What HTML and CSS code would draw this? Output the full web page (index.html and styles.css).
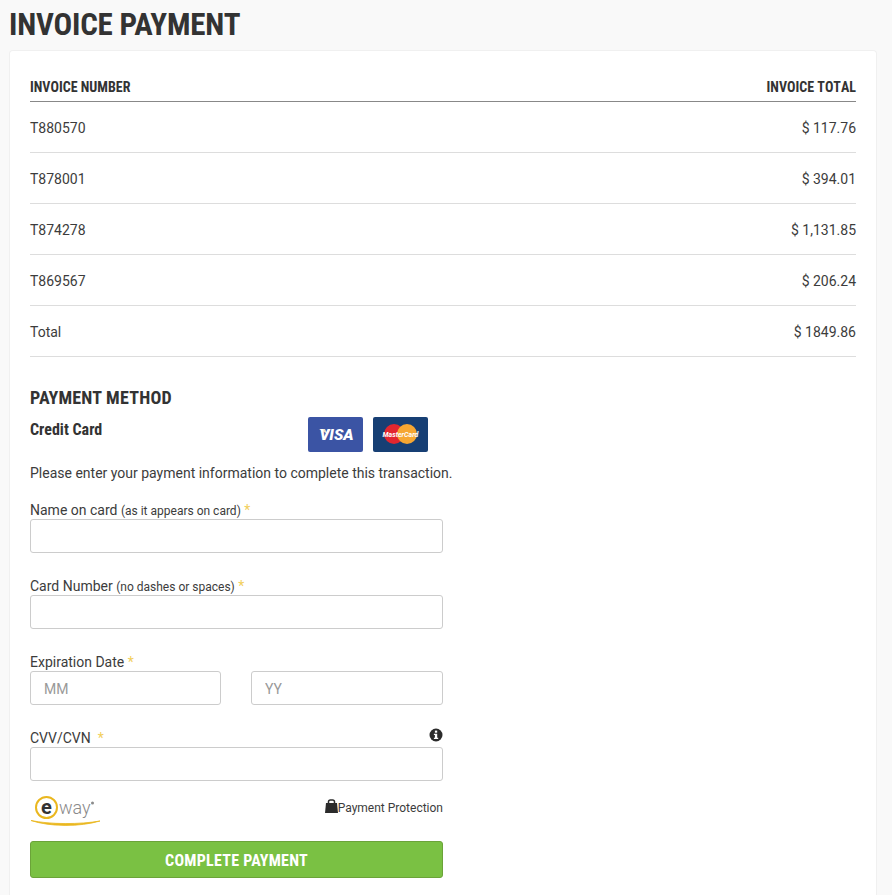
FILE: index.html
```html
<!DOCTYPE html>
<html lang="en">
<head>
<meta charset="utf-8">
<title>Invoice Payment</title>
<link rel="stylesheet" href="styles.css">
</head>
<body>
<main class="page">
  <h1 class="title">INVOICE PAYMENT</h1>
  <section class="card">
    <table class="invoices">
      <thead>
        <tr><th>INVOICE NUMBER</th><th class="num">INVOICE TOTAL</th></tr>
      </thead>
      <tbody>
        <tr><td>T880570</td><td class="num">$ 117.76</td></tr>
        <tr><td>T878001</td><td class="num">$ 394.01</td></tr>
        <tr><td>T874278</td><td class="num">$ 1,131.85</td></tr>
        <tr><td>T869567</td><td class="num">$ 206.24</td></tr>
        <tr><td>Total</td><td class="num">$ 1849.86</td></tr>
      </tbody>
    </table>

    <h2 class="method">PAYMENT METHOD</h2>
    <form class="pay">
      <div class="cc-row">
        <h3 class="cc-title">Credit Card</h3>
        <div class="logos">
          <svg class="logo" viewBox="0 0 55 35" width="55" height="35" aria-label="Visa">
            <rect width="55" height="35" rx="2" fill="#3b54a4"/>
            <path d="M11 12h6l2.500 5z" fill="#e6dcc4"/>
            <text x="28.500" y="22.800" text-anchor="middle" class="visa-text">VISA</text>
          </svg>
          <svg class="logo" viewBox="0 0 55 35" width="55" height="35" aria-label="MasterCard">
            <rect width="55" height="35" rx="2" fill="#173f74"/>
            <circle cx="21" cy="17" r="10" fill="#e2262f"/>
            <circle cx="34" cy="17" r="10" fill="#f6a732"/>
            <text x="27.500" y="19.500" text-anchor="middle" class="mc-text">MasterCard</text>
          </svg>
        </div>
      </div>
      <p class="intro">Please enter your payment information to complete this transaction.</p>

      <div class="field">
        <label class="lbl" for="name">Name on card <small>(as it appears on card)</small> <span class="req">*</span></label>
        <input class="input" id="name" type="text">
      </div>
      <div class="field">
        <label class="lbl" for="num">Card Number <small>(no dashes or spaces)</small> <span class="req">*</span></label>
        <input class="input" id="num" type="text">
      </div>
      <div class="field">
        <label class="lbl" for="mm">Expiration Date <span class="req">*</span></label>
        <div class="exp">
          <input class="input" id="mm" type="text" placeholder="MM">
          <input class="input" type="text" placeholder="YY">
        </div>
      </div>
      <div class="field">
        <div class="cvv-head">
          <label class="lbl" for="cvv">CVV/CVN &nbsp;<span class="req">*</span></label>
          <svg class="info" viewBox="0 0 14 14" width="14" height="14" aria-hidden="true">
            <circle cx="7" cy="7" r="6.500" fill="#2b2b2b"/>
            <rect x="5.900" y="2.600" width="2.300" height="2.100" fill="#fff"/>
            <path d="M4.900 5.800h3.300v3.900h1v1.300H4.900V9.700h1V7.100h-1z" fill="#fff"/>
          </svg>
        </div>
        <input class="input" id="cvv" type="text">
      </div>

      <div class="secure">
        <svg class="eway" viewBox="0 0 72 34" width="72" height="34" aria-label="eWAY">
          <circle cx="16.500" cy="12.500" r="10.500" fill="#fff" stroke="#eab71f" stroke-width="2"/>
          <text x="16.500" y="19" text-anchor="middle" class="eway-e">e</text>
          <text x="29" y="18.500" class="eway-way">way</text>
          <circle cx="62.500" cy="8" r="1.500" fill="#8a8a8a"/>
          <path d="M1 25.500C20 32 50 32 70 26C50 29.500 20 29.500 1 25.500z" fill="#eab71f" stroke="#eab71f" stroke-width=".8"/>
        </svg>
        <div class="protect">
          <svg class="lock" viewBox="0 0 13 14" width="13" height="14" aria-hidden="true">
            <path d="M3.500 4.500V2.800A1.900 1.900 0 0 1 5.400 .9h2.200a1.900 1.900 0 0 1 1.900 1.900v1.700" fill="none" stroke="#2b2b2b" stroke-width="1.500"/>
            <path d="M1 4h11L13 14H0z" fill="#2b2b2b"/>
          </svg>
          <span class="protect-text">Payment Protection</span>
        </div>
      </div>

      <button class="submit" type="button">COMPLETE PAYMENT</button>
    </form>
  </section>
</main>
</body>
</html>
```
FILE: styles.css
```css
* { box-sizing: border-box; }
html, body { margin: 0; padding: 0; }
body {
  background: #f9f9f9;
  font-family: Roboto, "Liberation Sans", sans-serif;
  font-size: 14px;
  color: #3c3c3c;
}
.page { padding: 0 15px 0 9px; }
.title {
  margin: 0;
  padding-top: 6px;
  height: 50px;
  font-size: 31px;
  line-height: 37px;
  font-weight: 700;
  font-stretch: 75%;
  letter-spacing: -.2px;
  color: #333;
}
.card {
  background: #fff;
  border: 1px solid #f0f0f0;
  border-bottom: 0;
  border-radius: 4px 4px 0 0;
  padding: 20px 20px 0;
  height: 845px;
}
.invoices { width: 100%; border-collapse: collapse; }
.invoices th {
  text-align: left;
  font-size: 14px;
  font-weight: 700;
  font-stretch: 75%;
  font-kerning: none;
  height: 30px;
  padding: 2px 0 0;
  color: #333;
  border-bottom: 1px solid #888;
}
.invoices td {
  height: 51px;
  padding: 2px 0 0;
  border-bottom: 1px solid #ddd;
}
.invoices .num { text-align: right; }
.method {
  margin: 30px 0 0;
  font-size: 18px;
  line-height: 22px;
  font-weight: 700;
  font-stretch: 75%;
  letter-spacing: .2px;
  color: #333;
}
.pay { width: 413px; }
.cc-row {
  display: flex;
  justify-content: space-between;
  padding-right: 15px;
  margin-top: 8px;
  height: 35px;
}
.cc-title {
  margin: 0;
  padding-top: 3px;
  font-size: 16px;
  line-height: 20px;
  font-weight: 700;
  font-stretch: 75%;
  color: #333;
}
.logos { display: flex; gap: 10px; }
.logo { display: block; }
.visa-text { font: italic 900 15.500px Roboto, sans-serif; fill: #fff; }
.mc-text { font: italic 700 7px Roboto, sans-serif; fill: #fff; }
.intro { margin: 11px 0 0; line-height: 20px; white-space: nowrap; }
.field { margin-top: 18px; }
.field + .field { margin-top: 24px; }
.lbl { display: block; line-height: 18px; height: 18px; }
.lbl small { font-size: 12px; }
.req { color: #f2cf5b; }
.input {
  display: block;
  width: 100%;
  height: 34px;
  border: 1px solid #ccc;
  border-radius: 3px;
  background: #fff;
  padding: 2px 13px 0;
  font: 14px Roboto, sans-serif;
  color: #333;
}
.input::placeholder { color: #999; opacity: 1; }
.exp { display: grid; grid-template-columns: 191px 192px; column-gap: 30px; }
.cvv-head { display: flex; justify-content: space-between; align-items: flex-start; }
.info { margin: -1px 0 0; }
.secure {
  display: flex;
  justify-content: space-between;
  align-items: flex-start;
  margin-top: 14px;
  height: 46px;
}
.protect { display: flex; align-items: flex-start; font-size: 12px; margin-top: 4px; }
.protect-text { margin-top: 2px; line-height: 14px; }
.submit {
  display: block;
  width: 100%;
  height: 37px;
  padding: 2px 0 0;
  background: #7ac143;
  border: 1px solid #6ba339;
  border-radius: 3px;
  color: #fff;
  font: 700 16px Roboto, sans-serif;
  font-stretch: 75%;
  letter-spacing: .25px;
}
.eway-e { font: 700 20px Roboto, sans-serif; fill: #333; }
.eway-way { font: 300 18px Roboto, sans-serif; fill: #8a8a8a; }
```
